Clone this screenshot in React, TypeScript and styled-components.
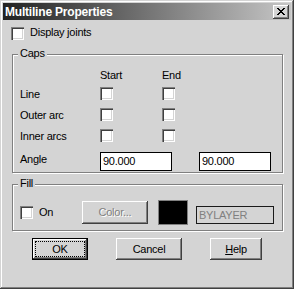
import React from "react";
import styled, { createGlobalStyle, css } from "styled-components";

const FACE = "#d4d4d4";
const SHADOW = "#808080";
const DARK = "#404040";

const GlobalStyle = createGlobalStyle`
  html, body { margin: 0; padding: 0; background: ${FACE}; }
  body {
    font-family: "Liberation Sans", Arial, sans-serif;
    font-size: 11px;
    letter-spacing: -0.25px;
    color: #000;
  }
  *, *::before, *::after { box-sizing: border-box; }
`;

const Window = styled.div`
  width: 294px;
  height: 289px;
  padding: 3px;
  background: ${FACE};
  box-shadow: inset -1px -1px 0 ${DARK}, inset 1px 1px 0 ${FACE},
    inset -2px -2px 0 ${SHADOW}, inset 2px 2px 0 #fff;
  display: flex;
  flex-direction: column;
`;

const TitleBar = styled.div`
  height: 17px;
  flex: none;
  display: flex;
  align-items: center;
  justify-content: space-between;
  padding: 0 2px;
  background: linear-gradient(to right, #222222, #c6c6c6);
`;

const TitleText = styled.span`
  color: #fff;
  font-weight: bold;
  font-size: 12px;
  letter-spacing: -0.2px;
  line-height: 13px;
  margin-top: 2px;
`;

const CloseButton = styled.button`
  width: 16px;
  height: 14px;
  padding: 0 0 1px 0;
  border: none;
  background: ${FACE};
  display: flex;
  align-items: center;
  justify-content: center;
  box-shadow: inset -1px -1px 0 ${DARK}, inset 1px 1px 0 #fff,
    inset -2px -2px 0 ${SHADOW};
`;

const Body = styled.div`
  display: flex;
  flex-direction: column;
  padding: 7px 8px 0 9px;
`;

const CheckBox = styled.span`
  display: inline-block;
  flex: none;
  width: 13px;
  height: 13px;
  background: #fff;
  box-shadow: inset 1px 1px 0 ${SHADOW}, inset 2px 2px 0 ${DARK},
    inset -1px -1px 0 #fff, inset -2px -2px 0 ${FACE};
`;

const DisplayRow = styled.label`
  display: flex;
  align-items: flex-start;
  gap: 6px;
  height: 13px;
  margin: 0 0 14px -1px;
`;

const Text = styled.span<{ $shift?: number }>`
  line-height: 13px;
  margin-top: ${(p) => p.$shift ?? 0}px;
  white-space: nowrap;
`;

const Group = styled.div<{ $mt?: number }>`
  position: relative;
  border: 1px solid ${SHADOW};
  box-shadow: inset 1px 1px 0 #fff, 1px 1px 0 #fff;
  margin-top: ${(p) => p.$mt ?? 0}px;
`;

const Legend = styled.span`
  position: absolute;
  top: -8px;
  left: 5px;
  padding: 0 2px;
  line-height: 13px;
  background: ${FACE};
`;

const CapsBody = styled.div`
  display: flex;
  flex-direction: column;
  padding: 14px 0 1px 7px;
`;

const CapsRow = styled.div<{ $cols: string; $mt?: number; $h: number }>`
  display: grid;
  grid-template-columns: ${(p) => p.$cols};
  align-items: start;
  height: ${(p) => p.$h}px;
  margin-top: ${(p) => p.$mt ?? 0}px;
  line-height: 13px;
`;

const EditBox = styled.div`
  width: 72px;
  height: 19px;
  background: #fff;
  border: 1px solid #000;
  padding: 0 2px;
  line-height: 17px;
`;

const FillRow = styled.div`
  display: flex;
  align-items: flex-start;
  padding: 15px 0 5px 7px;
`;

const OnGroup = styled.label`
  display: flex;
  align-items: flex-start;
  gap: 6px;
  width: 62px;
  margin-top: 6px;
`;

const PushButton = styled.button<{ $w: number; $h?: number; $default?: boolean; $mt?: number }>`
  width: ${(p) => p.$w}px;
  height: ${(p) => p.$h ?? 22}px;
  margin-top: ${(p) => p.$mt ?? 0}px;
  display: flex;
  padding: 3px;
  border: none;
  background: ${FACE};
  font-family: "Liberation Sans", Arial, sans-serif;
  font-size: 11px;
  letter-spacing: -0.25px;
  color: #000;
  box-shadow: inset -1px -1px 0 ${DARK}, inset 1px 1px 0 #fff,
    inset -2px -2px 0 ${SHADOW};
  ${(p) =>
    p.$default &&
    css`
      border: 1px solid #000;
      padding: 2px;
    `}
  &:disabled {
    color: ${SHADOW};
    text-shadow: 1px 1px 0 #fff;
  }
`;

const ButtonFace = styled.span<{ $focus?: boolean }>`
  flex: 1;
  display: flex;
  align-items: center;
  justify-content: center;
  border: 1px ${(p) => (p.$focus ? "dotted #000" : "solid transparent")};
  line-height: 13px;
`;

const Swatch = styled.div`
  width: 30px;
  height: 25px;
  margin-left: 10px;
  background: #000;
  border: 1px solid ${SHADOW};
`;

const ByLayer = styled.div`
  width: 78px;
  height: 18px;
  margin: 6px 0 0 8px;
  border: 1px solid #1a1a1a;
  padding: 0 2px;
  line-height: 16px;
  color: ${SHADOW};
`;

const ButtonRow = styled.div`
  display: flex;
  gap: 28px;
  margin: 7px 0 0 20px;
`;

const Mnemonic = styled.span`
  text-decoration: underline;
`;

const CloseGlyph = () => (
  <svg width="8" height="7" viewBox="0 0 8 7" shapeRendering="crispEdges">
    <path
      fill="#000"
      d="M0 0h2v1H0z M6 0h2v1H6z M1 1h2v1H1z M5 1h2v1H5z M2 2h4v1H2z M3 3h2v1H3z M2 4h4v1H2z M1 5h2v1H1z M5 5h2v1H5z M0 6h2v1H0z M6 6h2v1H6z"
    />
  </svg>
);

const CAPS_COLS = "80px 62px auto";

export default function App() {
  const rows = ["Line", "Outer arc", "Inner arcs"];
  return (
    <>
      <GlobalStyle />
      <Window>
        <TitleBar>
          <TitleText>Multiline Properties</TitleText>
          <CloseButton aria-label="Close">
            <CloseGlyph />
          </CloseButton>
        </TitleBar>
        <Body>
          <DisplayRow>
            <CheckBox />
            <Text $shift={-1}>Display joints</Text>
          </DisplayRow>

          <Group>
            <Legend>Caps</Legend>
            <CapsBody>
              <CapsRow $cols={CAPS_COLS} $h={13}>
                <span />
                <Text>Start</Text>
                <Text>End</Text>
              </CapsRow>
              {rows.map((r, i) => (
                <CapsRow key={r} $cols={CAPS_COLS} $h={13} $mt={i === 0 ? 5 : 8}>
                  <Text $shift={1}>{r}</Text>
                  <CheckBox />
                  <CheckBox />
                </CapsRow>
              ))}
              <CapsRow $cols="80px 99px 72px" $h={19} $mt={10}>
                <Text $shift={1}>Angle</Text>
                <EditBox>90.000</EditBox>
                <EditBox>90.000</EditBox>
              </CapsRow>
            </CapsBody>
          </Group>

          <Group $mt={11}>
            <Legend>Fill</Legend>
            <FillRow>
              <OnGroup>
                <CheckBox />
                <Text>On</Text>
              </OnGroup>
              <PushButton $w={66} $h={23} $mt={1} disabled>
                <ButtonFace>Color...</ButtonFace>
              </PushButton>
              <Swatch />
              <ByLayer>BYLAYER</ByLayer>
            </FillRow>
          </Group>

          <ButtonRow>
            <PushButton $w={56} $default>
              <ButtonFace $focus>OK</ButtonFace>
            </PushButton>
            <PushButton $w={66}>
              <ButtonFace>Cancel</ButtonFace>
            </PushButton>
            <PushButton $w={52}>
              <ButtonFace>
                <Mnemonic>H</Mnemonic>elp
              </ButtonFace>
            </PushButton>
          </ButtonRow>
        </Body>
      </Window>
    </>
  );
}
